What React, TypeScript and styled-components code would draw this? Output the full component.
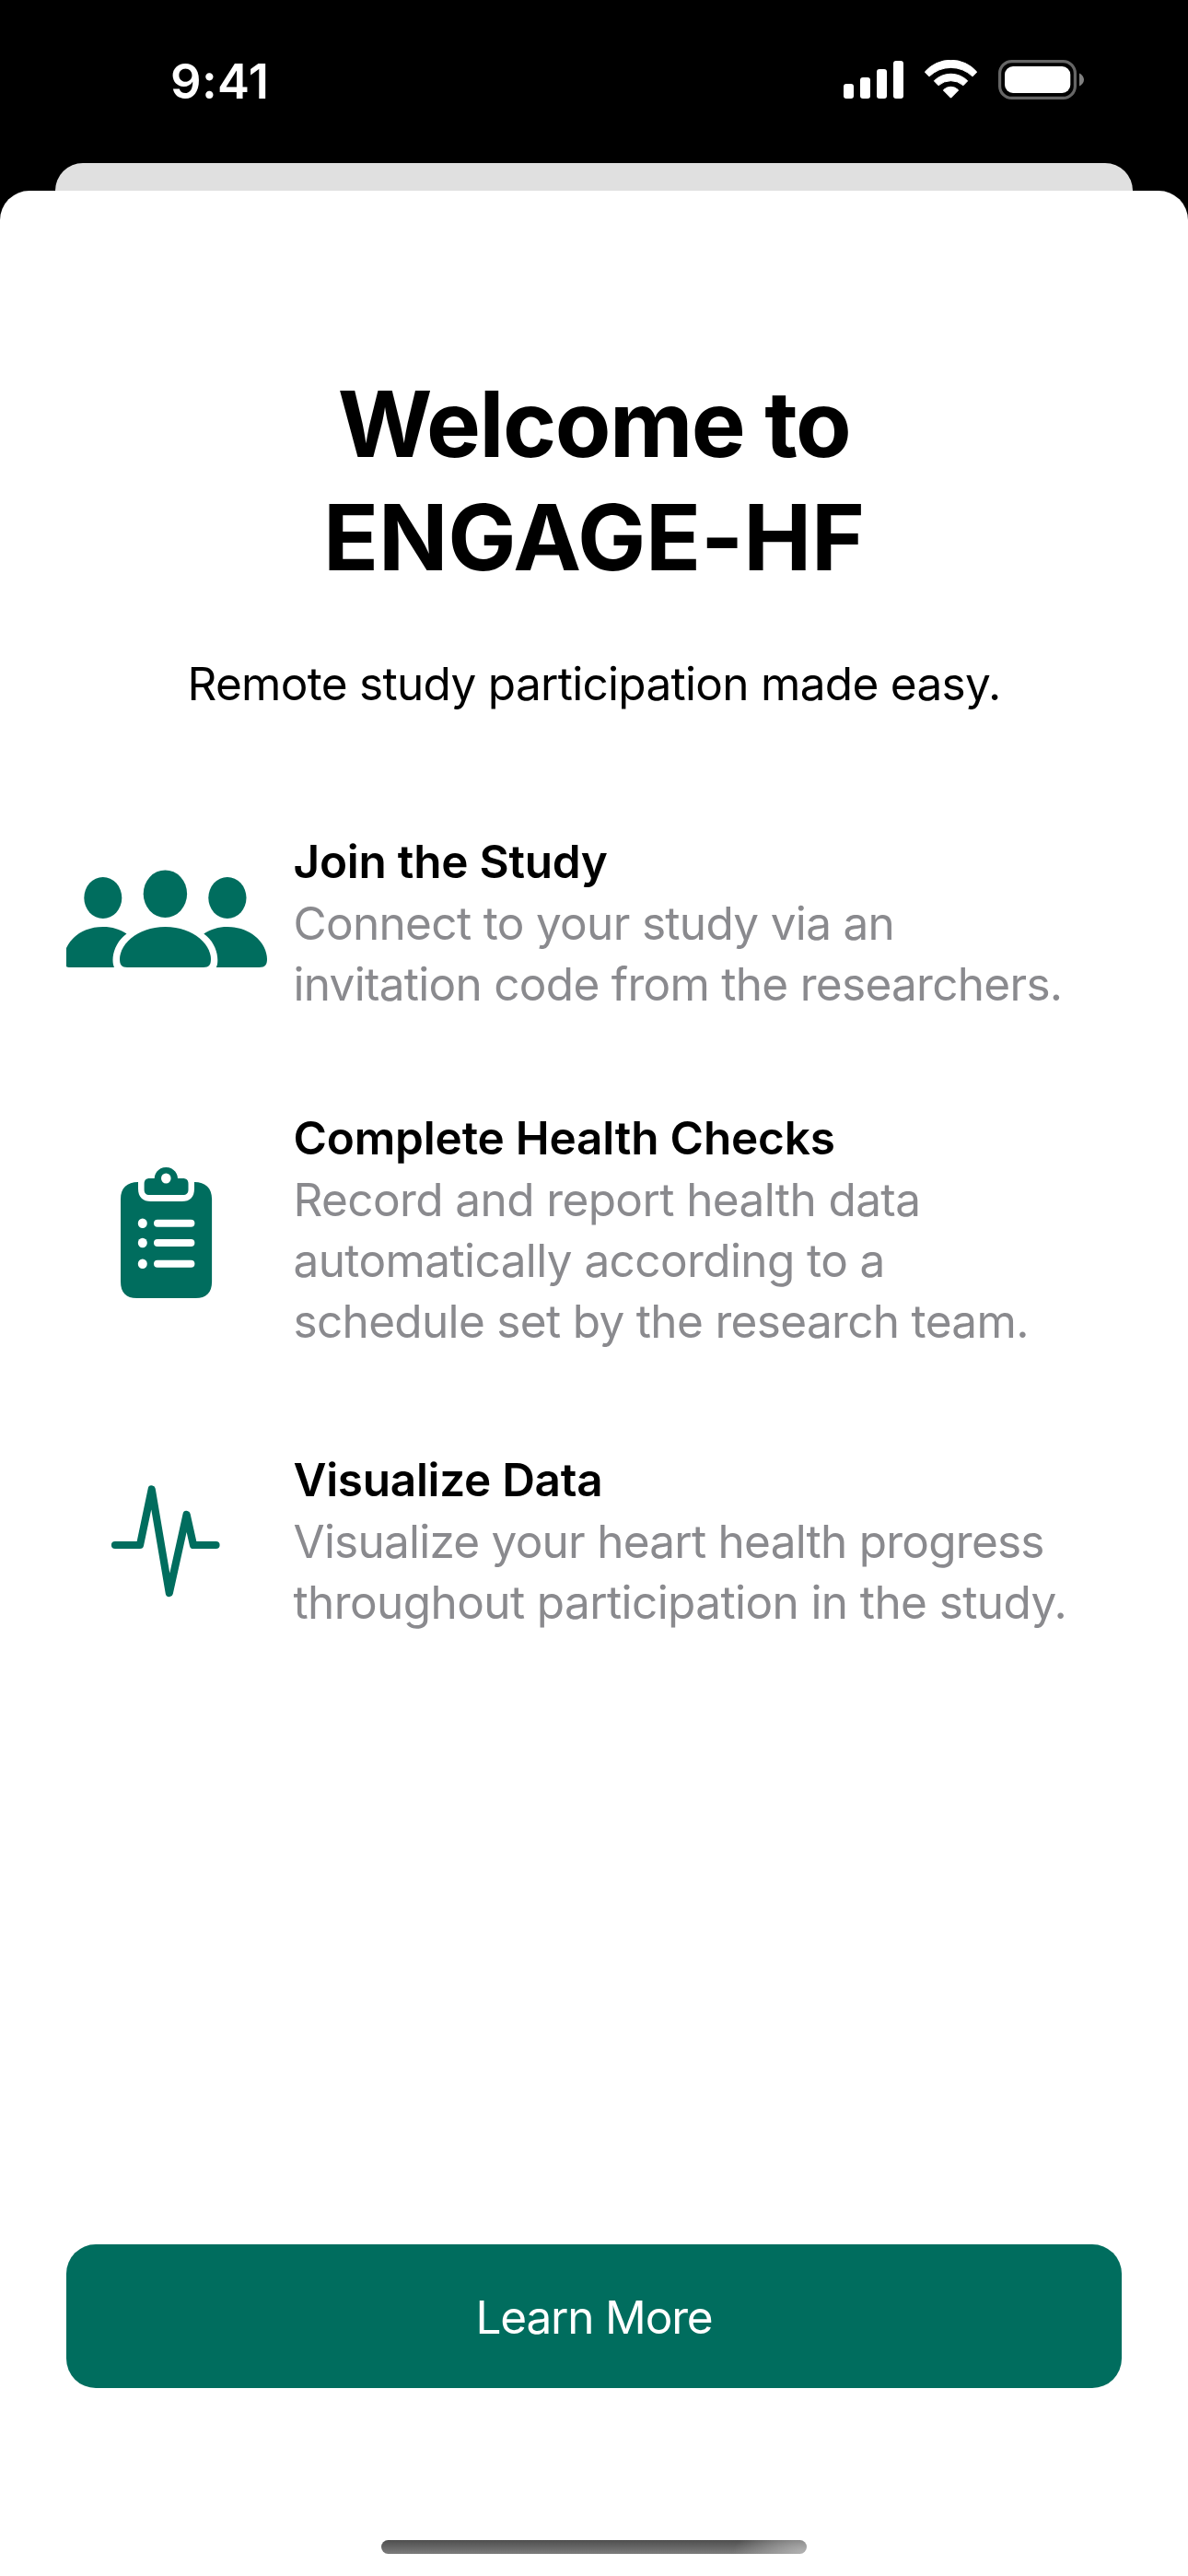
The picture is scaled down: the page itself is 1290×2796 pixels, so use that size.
import React from "react";
import styled, { createGlobalStyle } from "styled-components";

const GREEN = "#006d5e";

const GlobalStyle = createGlobalStyle`
  html, body { margin: 0; background: #000; }
  * { box-sizing: border-box; }
`;

const Screen = styled.div`
  display: flex;
  flex-direction: column;
  width: 1290px;
  height: 2796px;
  background: #000;
  color: #000;
  font-family: Inter, "Liberation Sans", sans-serif;
  overflow: hidden;
`;

const StatusBar = styled.header`
  display: flex;
  justify-content: space-between;
  align-items: flex-start;
  height: 177px;
  padding: 58px 113px 0 185px;
  color: #fff;
`;

const Clock = styled.span`
  font-size: 52.5px;
  font-weight: 600;
  line-height: 60px;
  letter-spacing: 0.4px;
`;

const StatusIcons = styled.div`
  display: flex;
  gap: 22px;
  padding-top: 7px;

  svg {
    display: block;
  }
`;

const BackCard = styled.div`
  height: 30px;
  margin: 0 60px;
  border-radius: 30px 30px 0 0;
  background: #e0e0e0;
`;

const Sheet = styled.main`
  flex: 1;
  display: flex;
  flex-direction: column;
  padding: 192px 72px 24px;
  border-radius: 32px 32px 0 0;
  background: #fff;
`;

const Title = styled.h1`
  margin: 0;
  font-size: 99px;
  font-weight: 700;
  line-height: 123px;
  text-align: center;
`;

const Line = styled.span<{ $tracking: number }>`
  display: block;
  white-space: nowrap;
  letter-spacing: ${(p) => p.$tracking}px;
`;

const Subtitle = styled.p`
  margin: 64px 0 0;
  font-size: 49.5px;
  line-height: 66px;
  text-align: center;
`;

const Features = styled.ul`
  display: flex;
  flex-direction: column;
  margin: 127px 0 0;
  padding: 0;
  list-style: none;
`;

const Feature = styled.li<{ $gap: number }>`
  display: flex;
  align-items: center;
  gap: 28.5px;
  margin-bottom: ${(p) => p.$gap}px;
`;

const FeatureIcon = styled.svg`
  flex: none;
  width: 218px;
  color: ${GREEN};
`;

const FeatureTitle = styled.h2`
  margin: 0;
  font-size: 49.5px;
  font-weight: 600;
  line-height: 67px;
`;

const FeatureText = styled.p`
  margin: 0;
  font-size: 49.5px;
  line-height: 66px;
  color: #8a8a8e;
`;

const Button = styled.button`
  height: 156px;
  margin: auto 0 165px;
  padding: 2px 0 0;
  border: 0;
  border-radius: 32px;
  background: ${GREEN};
  color: #fff;
  font: 400 49.5px/66px Inter, "Liberation Sans", sans-serif;
`;

const HomeIndicator = styled.div`
  align-self: center;
  width: 462px;
  height: 15px;
  border-radius: 8px;
  background: radial-gradient(ellipse 80px 36px at 100% 100%, #b4b4b4 0%, rgba(150, 150, 150, 0) 100%),
    linear-gradient(#4e4e4e, #7c7c7c);
`;

const Signal = () => (
  <svg width="65" height="43" viewBox="0 0 65 43" fill="#fff">
    <rect x="0" y="26" width="11" height="16" rx="3" />
    <rect x="18" y="19" width="11" height="23" rx="3" />
    <rect x="36" y="10" width="11" height="32" rx="3" />
    <rect x="54" y="1" width="11" height="41" rx="3" />
  </svg>
);

const Wifi = () => (
  <svg width="59" height="43" viewBox="0 0 59 43" fill="#fff" stroke="#fff" strokeWidth="1" strokeLinejoin="round">
    <path d="M1.3 13.1A37.3 37.3 0 0 1 57.7 13.1L53 17.9A33.8 33.8 0 0 0 6 17.9Z" />
    <path d="M11.3 22.8A25.6 25.6 0 0 1 47.7 22.8L43 27.7A20.6 20.6 0 0 0 16 27.7Z" />
    <path d="M21.3 32.9A11 11 0 0 1 37.7 32.9L29.5 41.2Z" />
  </svg>
);

const Battery = () => (
  <svg width="93" height="43" viewBox="0 0 93 43">
    <rect x="1.6" y="1.6" width="81.8" height="39.8" rx="13" fill="none" stroke="#666" strokeWidth="3.2" />
    <rect x="7" y="7" width="71.3" height="29" rx="9" fill="#fff" />
    <path d="M88 14.5C91 16 93 18.6 93 21.6S91 27.2 88 28.5Z" fill="#808080" />
  </svg>
);

const PeopleIcon = () => (
  <FeatureIcon height="199" viewBox="0 0 218 199" fill="currentColor">
    <ellipse cx="39.8" cy="72.5" rx="20.5" ry="22.5" />
    <ellipse cx="107.4" cy="68.2" rx="23.7" ry="25.8" />
    <ellipse cx="174.9" cy="72.5" rx="20.6" ry="22.5" />
    <path d="M66 148C60 148 58 145 58 139C58 124 76 104 107.5 104S157 124 157 139C157 145 155 148 149 148Z" />
    <path d="M0 127C6 114 20 104 40 104C50 104 58 106.5 65.5 111.5C55 119 50.5 131 50.5 140C50.5 143 51 146 52 148H4C2 148 .8 147.6 0 147Z" />
    <path d="M149.3 111.5C157 106.5 165 104 174.8 104C203 104 218 124 218 139C218 145 216 148 209.5 148H162.8C164 146 164.3 143 164.3 140C164.3 131 160 119 149.3 111.5Z" />
  </FeatureIcon>
);

const ClipboardIcon = () => (
  <FeatureIcon height="265" viewBox="0 0 218 265" fill="currentColor">
    <path d="M78 81V88C78 97.5 83 102 92 102H125.5C134.5 102 139 97.5 139 88V81C151 81 158.1 87.5 158.1 99.5V189C158.1 201 152 207 140.5 207H76.5C65 207 59 201 59 189V99.5C59 87.5 66 81 78 81Z" />
    <path
      fillRule="evenodd"
      d="M90.5 77H95.7C96 70 101.5 65 108.3 65S120.7 70 121 77H126.5C130.5 77 132.5 79 132.5 83V89C132.5 93 130.5 95 126.5 95H90.5C86.5 95 84.6 93 84.6 89V83C84.6 79 86.5 77 90.5 77ZM108.3 71.5A5.3 5.5 0 1 0 108.3 82.5A5.3 5.5 0 1 0 108.3 71.5Z"
    />
    {[125.8, 147, 169.7].map((y) => (
      <g key={y} fill="#fff">
        <ellipse cx="82.8" cy={y} rx="5" ry="5.3" />
        <rect x="95" y={y - 4} width="44.4" height="8" rx="4" />
      </g>
    ))}
  </FeatureIcon>
);

const WaveformIcon = () => (
  <FeatureIcon height="199" viewBox="0 0 218 199" fill="none" stroke="currentColor">
    <path
      d="M53 104H80L92.7 43.5L111.8 156L130.6 71L138 104H162.5"
      strokeWidth="8.2"
      strokeLinecap="round"
      strokeLinejoin="round"
    />
  </FeatureIcon>
);

type TextLine = [text: string, tracking: number];

const features: { icon: React.ReactNode; title: TextLine; lines: TextLine[]; gap: number }[] = [
  {
    icon: <PeopleIcon />,
    title: ["Join the Study", -0.24],
    lines: [
      ["Connect to your study via an", -0.68],
      ["invitation code from the researchers.", -0.71],
    ],
    gap: 101,
  },
  {
    icon: <ClipboardIcon />,
    title: ["Complete Health Checks", -0.19],
    lines: [
      ["Record and report health data", -0.6],
      ["automatically according to a", -0.6],
      ["schedule set by the research team.", -0.67],
    ],
    gap: 106,
  },
  {
    icon: <WaveformIcon />,
    title: ["Visualize Data", -0.3],
    lines: [
      ["Visualize your heart health progress", -0.76],
      ["throughout participation in the study.", -0.6],
    ],
    gap: 0,
  },
];

export default function App() {
  return (
    <Screen>
      <GlobalStyle />
      <StatusBar>
        <Clock>9:41</Clock>
        <StatusIcons>
          <Signal />
          <Wifi />
          <Battery />
        </StatusIcons>
      </StatusBar>
      <BackCard />
      <Sheet>
        <Title>
          <Line $tracking={-1.5}>Welcome to</Line>
          <Line $tracking={-0.16}>ENGAGE-HF</Line>
        </Title>
        <Subtitle>
          <Line $tracking={-0.7}>Remote study participation made easy.</Line>
        </Subtitle>
        <Features>
          {features.map((f) => (
            <Feature key={f.title[0]} $gap={f.gap}>
              {f.icon}
              <div>
                <FeatureTitle>
                  <Line $tracking={f.title[1]}>{f.title[0]}</Line>
                </FeatureTitle>
                <FeatureText>
                  {f.lines.map(([text, tracking]) => (
                    <Line key={text} $tracking={tracking}>
                      {text}
                    </Line>
                  ))}
                </FeatureText>
              </div>
            </Feature>
          ))}
        </Features>
        <Button>
          <Line $tracking={-1.19}>Learn More</Line>
        </Button>
        <HomeIndicator />
      </Sheet>
    </Screen>
  );
}
